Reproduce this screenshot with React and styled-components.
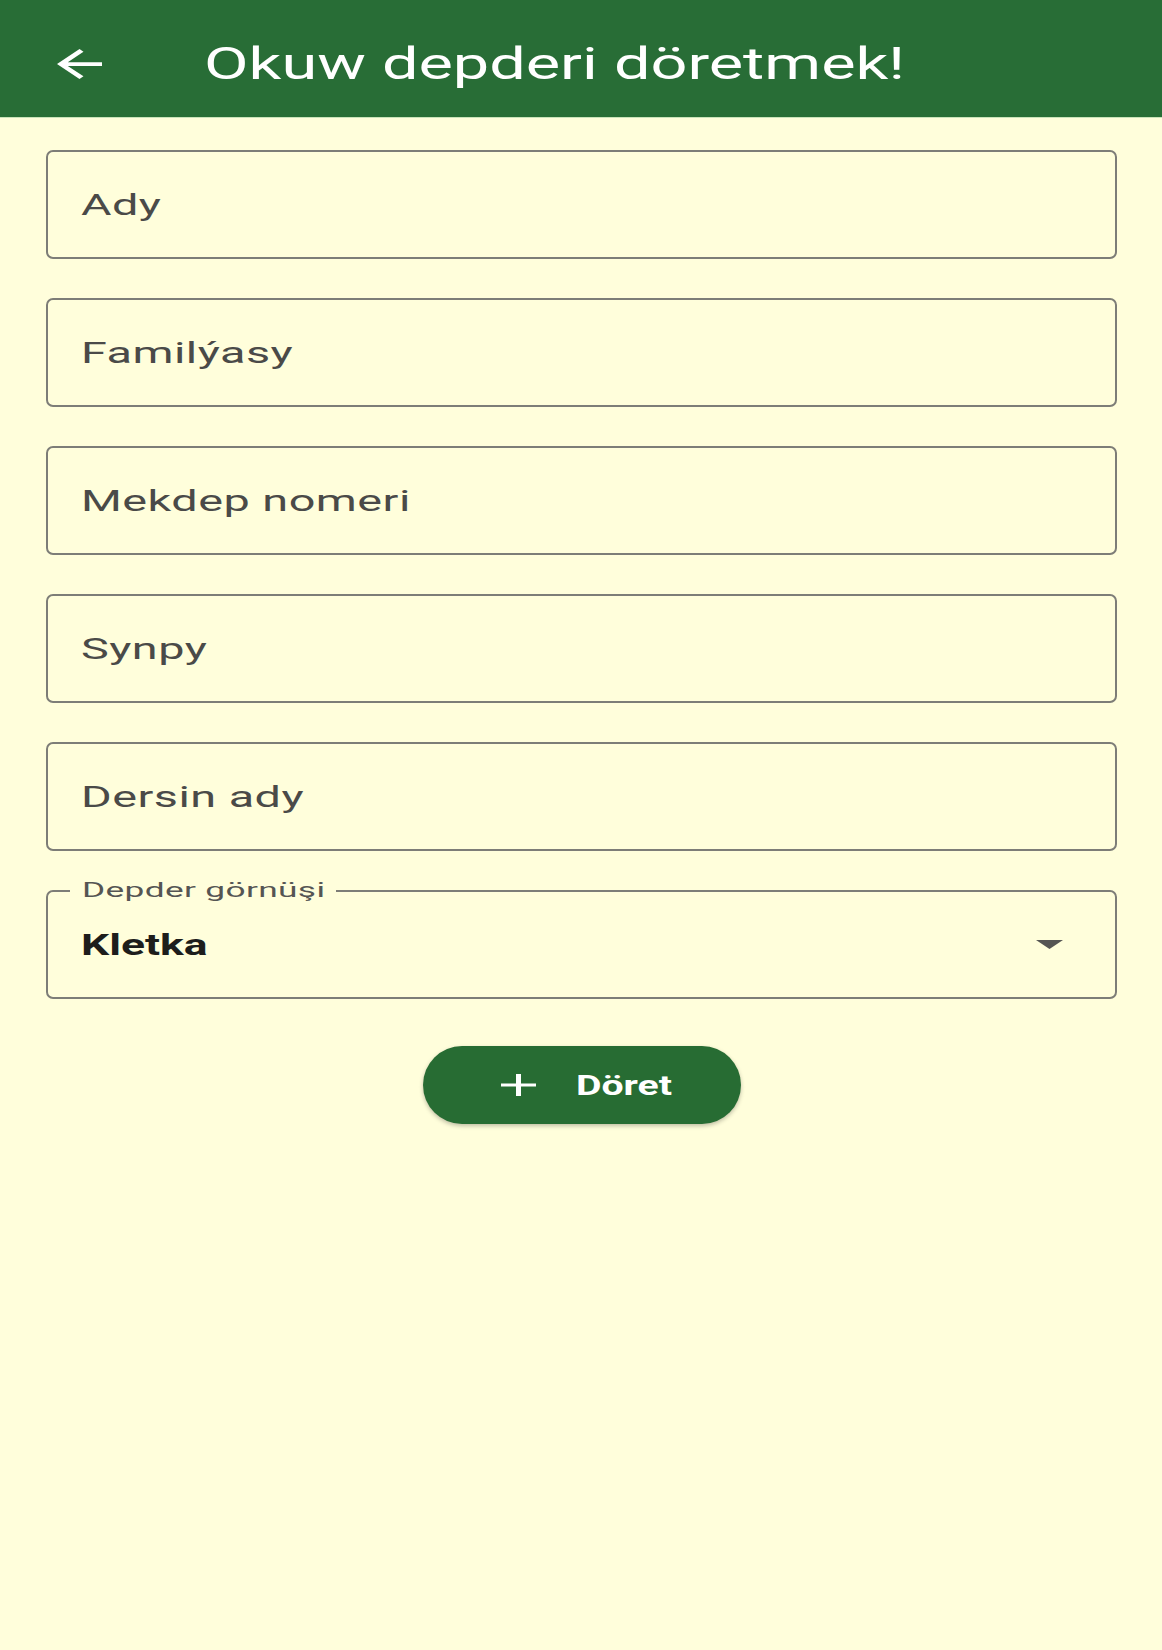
import React from "react";
import styled, { createGlobalStyle } from "styled-components";

const GlobalStyle = createGlobalStyle`
  body {
    margin: 0;
    background: #fffedb;
    font-family: Roboto, "Noto Sans", sans-serif;
  }
`;

const fields = ["Ady", "Familýasy", "Mekdep nomeri", "Synpy", "Dersin ady"];

const App = () => {
  return (
    <Page>
      <GlobalStyle />
      <Header>
        <BackButton aria-label="back">
          <svg width="45" height="30" viewBox="4 4 16 16" preserveAspectRatio="none">
            <path
              d="M20 11H7.83l5.59-5.59L12 4l-8 8 8 8 1.41-1.41L7.83 13H20v-2z"
              fill="#fff"
            />
          </svg>
        </BackButton>
        <Title>Okuw depderi döretmek!</Title>
      </Header>

      <Form>
        {fields.map((name) => (
          <Field key={name}>
            <FieldText>{name}</FieldText>
          </Field>
        ))}

        <SelectField>
          <FloatLabel>
            <LabelText>Depder görnüşi</LabelText>
          </FloatLabel>
          <SelectValue>Kletka</SelectValue>
          <svg width="27" height="9" viewBox="0 0 27 9">
            <polygon points="0,0 27,0 13.5,9" fill="#555553" />
          </svg>
        </SelectField>

        <ButtonRow>
          <CreateButton>
            <svg width="35" height="22" viewBox="5 5 14 14" preserveAspectRatio="none">
              <path d="M19 13h-6v6h-2v-6H5v-2h6V5h2v6h6v2z" fill="#fff" />
            </svg>
            <ButtonText>Döret</ButtonText>
          </CreateButton>
        </ButtonRow>
      </Form>
    </Page>
  );
};

const Page = styled.div`
  min-height: 1650px;
  background: #fffedb;
`;

const Header = styled.header`
  box-sizing: border-box;
  height: 118px;
  padding: 10px 0 0 57px;
  background: #286d36;
  display: flex;
  align-items: center;
  border-bottom: 1px solid #c9e3b8;
`;

const BackButton = styled.div`
  width: 45px;
  height: 30px;
  margin-right: 102px;
  display: flex;
`;

const Title = styled.h1`
  margin: 0;
  display: inline-block;
  font-size: 45px;
  font-weight: 400;
  color: #fff;
  white-space: nowrap;
  transform: scaleX(1.44);
  transform-origin: left center;
`;

const Form = styled.main`
  display: flex;
  flex-direction: column;
  gap: 39px;
  padding: 32px 45px 0 46px;
`;

const Field = styled.div`
  position: relative;
  box-sizing: border-box;
  height: 109px;
  border: 2px solid #7d7d77;
  border-radius: 7px;
  display: flex;
  align-items: center;
  padding-left: 33px;
`;

const FieldText = styled.span`
  display: inline-block;
  font-size: 30px;
  color: #4a4a48;
  white-space: nowrap;
  letter-spacing: 0.3px;
  transform: scaleX(1.56);
  transform-origin: left center;
`;

const SelectField = styled(Field)`
  justify-content: space-between;
  padding-right: 52px;
`;

const FloatLabel = styled.span`
  position: absolute;
  top: -14px;
  left: 22px;
  padding: 0 12px;
  width: 242px;
  height: 24px;
  background: #fffedb;
  line-height: 24px;
`;

const LabelText = styled.span`
  display: inline-block;
  font-size: 21px;
  color: #555553;
  white-space: nowrap;
  letter-spacing: 0.2px;
  transform: scaleX(1.68);
  transform-origin: left center;
`;

const SelectValue = styled.span`
  display: inline-block;
  font-size: 30px;
  font-weight: 700;
  color: #1d1d1b;
  white-space: nowrap;
  transform: scaleX(1.48);
  transform-origin: left center;
`;

const ButtonRow = styled.div`
  display: flex;
  justify-content: center;
  margin-top: 8px;
`;

const CreateButton = styled.button`
  box-sizing: border-box;
  width: 318px;
  height: 78px;
  border: none;
  border-radius: 39px;
  background: #276c33;
  box-shadow: 0 2px 4px rgba(0, 0, 0, 0.25);
  display: flex;
  align-items: center;
  gap: 40px;
  padding: 0 0 0 78px;
  cursor: pointer;
`;

const ButtonText = styled.span`
  display: inline-block;
  font-family: Roboto, "Noto Sans", sans-serif;
  font-size: 28px;
  font-weight: 700;
  color: #fff;
  white-space: nowrap;
  transform: scaleX(1.4);
  transform-origin: left center;
`;

export default App;
